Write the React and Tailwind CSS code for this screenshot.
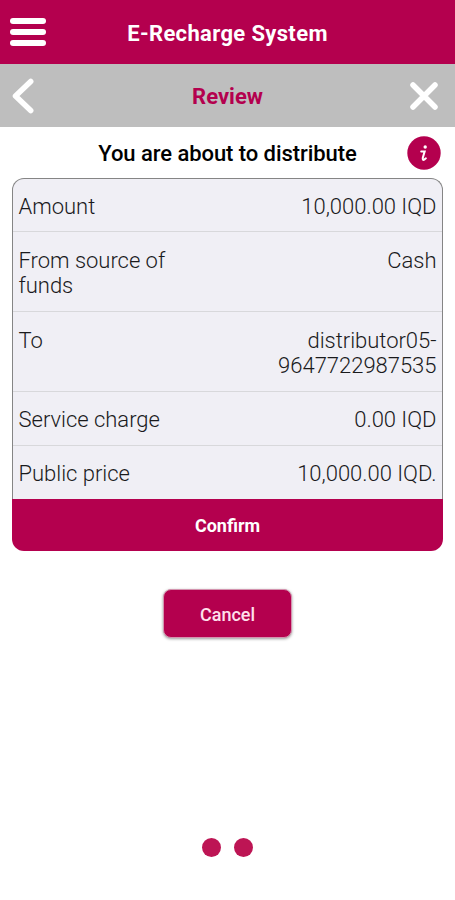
import React from "react";

const rows = [
  { label: "Amount", value: ["10,000.00 IQD"], height: "h-[53px] pt-[14.5px]" },
  { label: "From source of funds", value: ["Cash"], height: "h-[80px] pt-4" },
  { label: "To", value: ["distributor05-", "9647722987535"], height: "h-[80px] pt-4" },
  { label: "Service charge", value: ["0.00 IQD"], height: "h-[54px] pt-[15px]" },
  { label: "Public price", value: ["10,000.00 IQD."], height: "h-[53px] pt-[15px]" },
];

export default function App() {
  return (
    <div className="flex h-[900px] w-[455px] flex-col overflow-hidden bg-white font-['Roboto',sans-serif]">
      <header className="flex h-16 shrink-0 items-center bg-[#b4004e] px-2.5">
        <button className="flex w-9 flex-col gap-[5px]" aria-label="Menu">
          <span className="h-[6px] rounded-full bg-white" />
          <span className="h-[6px] rounded-full bg-white" />
          <span className="h-[6px] rounded-full bg-white" />
        </button>
        <h1 className="grow pr-9 pt-1 text-center text-[22px] leading-7 font-bold tracking-[0.35px] text-white">E-Recharge System</h1>
      </header>
      <nav className="flex h-[63px] shrink-0 items-center justify-between bg-[#bebebe] pl-3 pr-[17px]">
        <svg className="h-9 w-7" viewBox="0 0 28 36" fill="none" stroke="white" strokeWidth="5.5" strokeLinecap="round" aria-label="Back">
          <path d="M18.7 3.5 L3.5 18 L18.7 32.5" strokeLinejoin="round" />
        </svg>
        <h2 className="pl-[5px] pt-[2px] text-[22px] leading-7 font-bold text-[#b4004e]">Review</h2>
        <svg className="h-7 w-7" viewBox="0 0 28 28" fill="none" stroke="white" strokeWidth="5.5" strokeLinecap="round" aria-label="Close">
          <path d="M3 3 L25 25 M25 3 L3 25" />
        </svg>
      </nav>
      <div className="flex h-[51px] shrink-0 items-center pl-12 pr-[14px]">
        <p className="grow pt-[2px] text-center text-[22px] leading-7 font-medium tracking-[-0.06px] text-black">You are about to distribute</p>
        <svg className="h-[34px] w-[34px] shrink-0" viewBox="0 0 34 34" fill="none" aria-label="Information">
          <circle cx="17" cy="17" r="16.7" fill="#b4004e" />
          <circle cx="18.2" cy="11" r="1.7" fill="white" />
          <path d="M14.2 15.4 H17.7 L15.8 21.8 Q15.3 24.6 17.3 23.6 L18.9 22.3" stroke="white" strokeWidth="2" strokeLinecap="round" />
        </svg>
      </div>
      <main className="mx-3 h-[373px] w-[431px] shrink-0">
        <dl className="h-[321px] rounded-t-xl border border-b-0 border-[#858585] bg-[#f0eff5]">
          {rows.map((row) => (
            <div key={row.label} className={`flex justify-between border-b border-[#d8d8db] px-[5.5px] text-[22px] leading-[25px] font-[350] tracking-[-0.02px] text-[#1a1a1c] last:border-0 ${row.height}`}>
              <dt className="w-[165px]">{row.label}</dt>
              <dd className="text-right">
                {row.value.map((line) => (
                  <span className="block" key={line}>{line}</span>
                ))}
              </dd>
            </div>
          ))}
        </dl>
        <button className="block h-[52px] w-full rounded-b-xl bg-[#b4004e] pt-[1px] text-center text-[18px] font-bold text-white">Confirm</button>
      </main>
      <button className="ml-[163px] mt-[38px] h-[49px] w-[129px] shrink-0 rounded-lg border border-[#d493ae] bg-[#b4004e] pt-[1px] text-[18px] font-medium text-[#ffe0ec] shadow-[0_1px_3px_rgba(0,0,0,0.4)]">Cancel</button>
      <div className="mt-auto mb-[43.5px] flex justify-center gap-[13px]">
        <span className="h-[19px] w-[19px] rounded-full bg-[#bd1554]" />
        <span className="h-[19px] w-[19px] rounded-full bg-[#bd1554]" />
      </div>
    </div>
  );
}
